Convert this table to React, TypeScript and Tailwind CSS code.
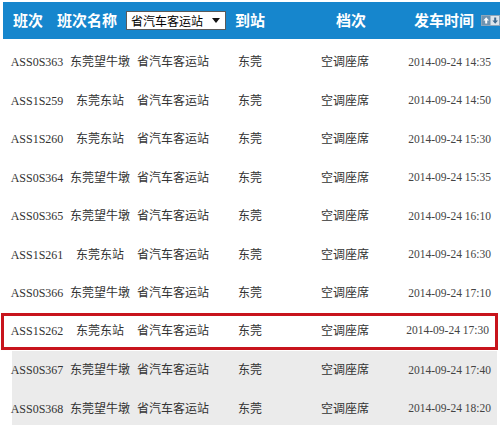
import React from 'react';

type Trip = {
  code: string;
  from: string;
  station: string;
  to: string;
  level: string;
  time: string;
};

const trips: Trip[] = [
  { code: 'ASS0S363', from: '东莞望牛墩', station: '省汽车客运站', to: '东莞', level: '空调座席', time: '2014-09-24 14:35' },
  { code: 'ASS1S259', from: '东莞东站', station: '省汽车客运站', to: '东莞', level: '空调座席', time: '2014-09-24 14:50' },
  { code: 'ASS1S260', from: '东莞东站', station: '省汽车客运站', to: '东莞', level: '空调座席', time: '2014-09-24 15:30' },
  { code: 'ASS0S364', from: '东莞望牛墩', station: '省汽车客运站', to: '东莞', level: '空调座席', time: '2014-09-24 15:35' },
  { code: 'ASS0S365', from: '东莞望牛墩', station: '省汽车客运站', to: '东莞', level: '空调座席', time: '2014-09-24 16:10' },
  { code: 'ASS1S261', from: '东莞东站', station: '省汽车客运站', to: '东莞', level: '空调座席', time: '2014-09-24 16:30' },
  { code: 'ASS0S366', from: '东莞望牛墩', station: '省汽车客运站', to: '东莞', level: '空调座席', time: '2014-09-24 17:10' },
  { code: 'ASS1S262', from: '东莞东站', station: '省汽车客运站', to: '东莞', level: '空调座席', time: '2014-09-24 17:30' },
  { code: 'ASS0S367', from: '东莞望牛墩', station: '省汽车客运站', to: '东莞', level: '空调座席', time: '2014-09-24 17:40' },
  { code: 'ASS0S368', from: '东莞望牛墩', station: '省汽车客运站', to: '东莞', level: '空调座席', time: '2014-09-24 18:20' },
];

const SortIcon = () => (
  <svg width="19" height="11" viewBox="0 0 19 11">
    <rect x="0.5" y="0.5" width="18" height="10" fill="#dde5ec" stroke="#8ea6ba" />
    <rect x="1" y="1" width="8.5" height="9" fill="#6f93b0" />
    <path d="M5.2 2.2 L8 5.4 L6.2 5.4 L6.2 8.6 L4.2 8.6 L4.2 5.4 L2.4 5.4 Z" fill="#ffffff" />
    <path d="M14.2 8.8 L11.4 5.6 L13.2 5.6 L13.2 2.4 L15.2 2.4 L15.2 5.6 L17 5.6 Z" fill="#3d6a8f" />
  </svg>
);

// one line of the timetable, same columns for every state
const Cells = ({ trip }: { trip: Trip }) => (
  <div className="grid h-full grid-cols-[50px_76px_70px_84px_106px_1fr] items-center whitespace-nowrap text-[12px] text-[#333]">
    <div className="flex justify-center">{trip.code}</div>
    <div className="flex justify-center">{trip.from}</div>
    <div className="flex justify-center">{trip.station}</div>
    <div className="flex justify-center">{trip.to}</div>
    <div className="flex justify-center">{trip.level}</div>
    <div className="flex justify-end pr-[6px] text-[11.5px] text-[#444]">{trip.time}</div>
  </div>
);

export default function App() {
  return (
    <div
      className="h-[425px] w-[500px] overflow-hidden bg-white"
      style={{ fontFamily: '"Liberation Serif", "Noto Sans CJK SC", serif' }}
    >
      {/* HEADER */}
      <div
        className="ml-[3px] mt-[2px] flex h-[37px] items-center bg-[#1686cd] pl-[10px] text-[15px] font-bold text-white whitespace-nowrap"
        style={{ fontFamily: '"Noto Sans CJK SC", sans-serif' }}
      >
        <span className="w-[30px]">班次</span>
        <span className="ml-[14px] w-[60px]">班次名称</span>
        <div className="ml-[9px] flex h-[19px] w-[100px] items-center justify-between border border-[#5a5a5a] bg-white pl-[4px] pr-[5px] text-[12px] font-normal text-black">
          <span>省汽车客运站</span>
          <svg width="8" height="5" viewBox="0 0 8 5">
            <path d="M0 0 L8 0 L4 5 Z" fill="#111" />
          </svg>
        </div>
        <span className="ml-[9px] w-[30px]">到站</span>
        <span className="ml-[71px] w-[30px]">档次</span>
        <span className="ml-[48px] w-[60px]">发车时间</span>
        <span className="ml-[7px] flex">
          <SortIcon />
        </span>
      </div>

      {/* ROWS */}
      <div className="pt-[4px]">
        {trips.map((trip, i) => {
          if (i === 7) {
            return (
              <div key={trip.code} className="h-[38.5px]">
                <div className="ml-[1px] h-[37px] w-[497px] border-[3px] border-[#c8141c] pl-[8px]">
                  <Cells trip={trip} />
                </div>
              </div>
            );
          }
          return (
            <div key={trip.code} className="h-[38.5px]">
              <div className={`ml-[12px] h-full w-[485px] ${i > 7 ? 'bg-[#ebebeb]' : ''}`}>
                <Cells trip={trip} />
              </div>
            </div>
          );
        })}
      </div>
    </div>
  );
}
